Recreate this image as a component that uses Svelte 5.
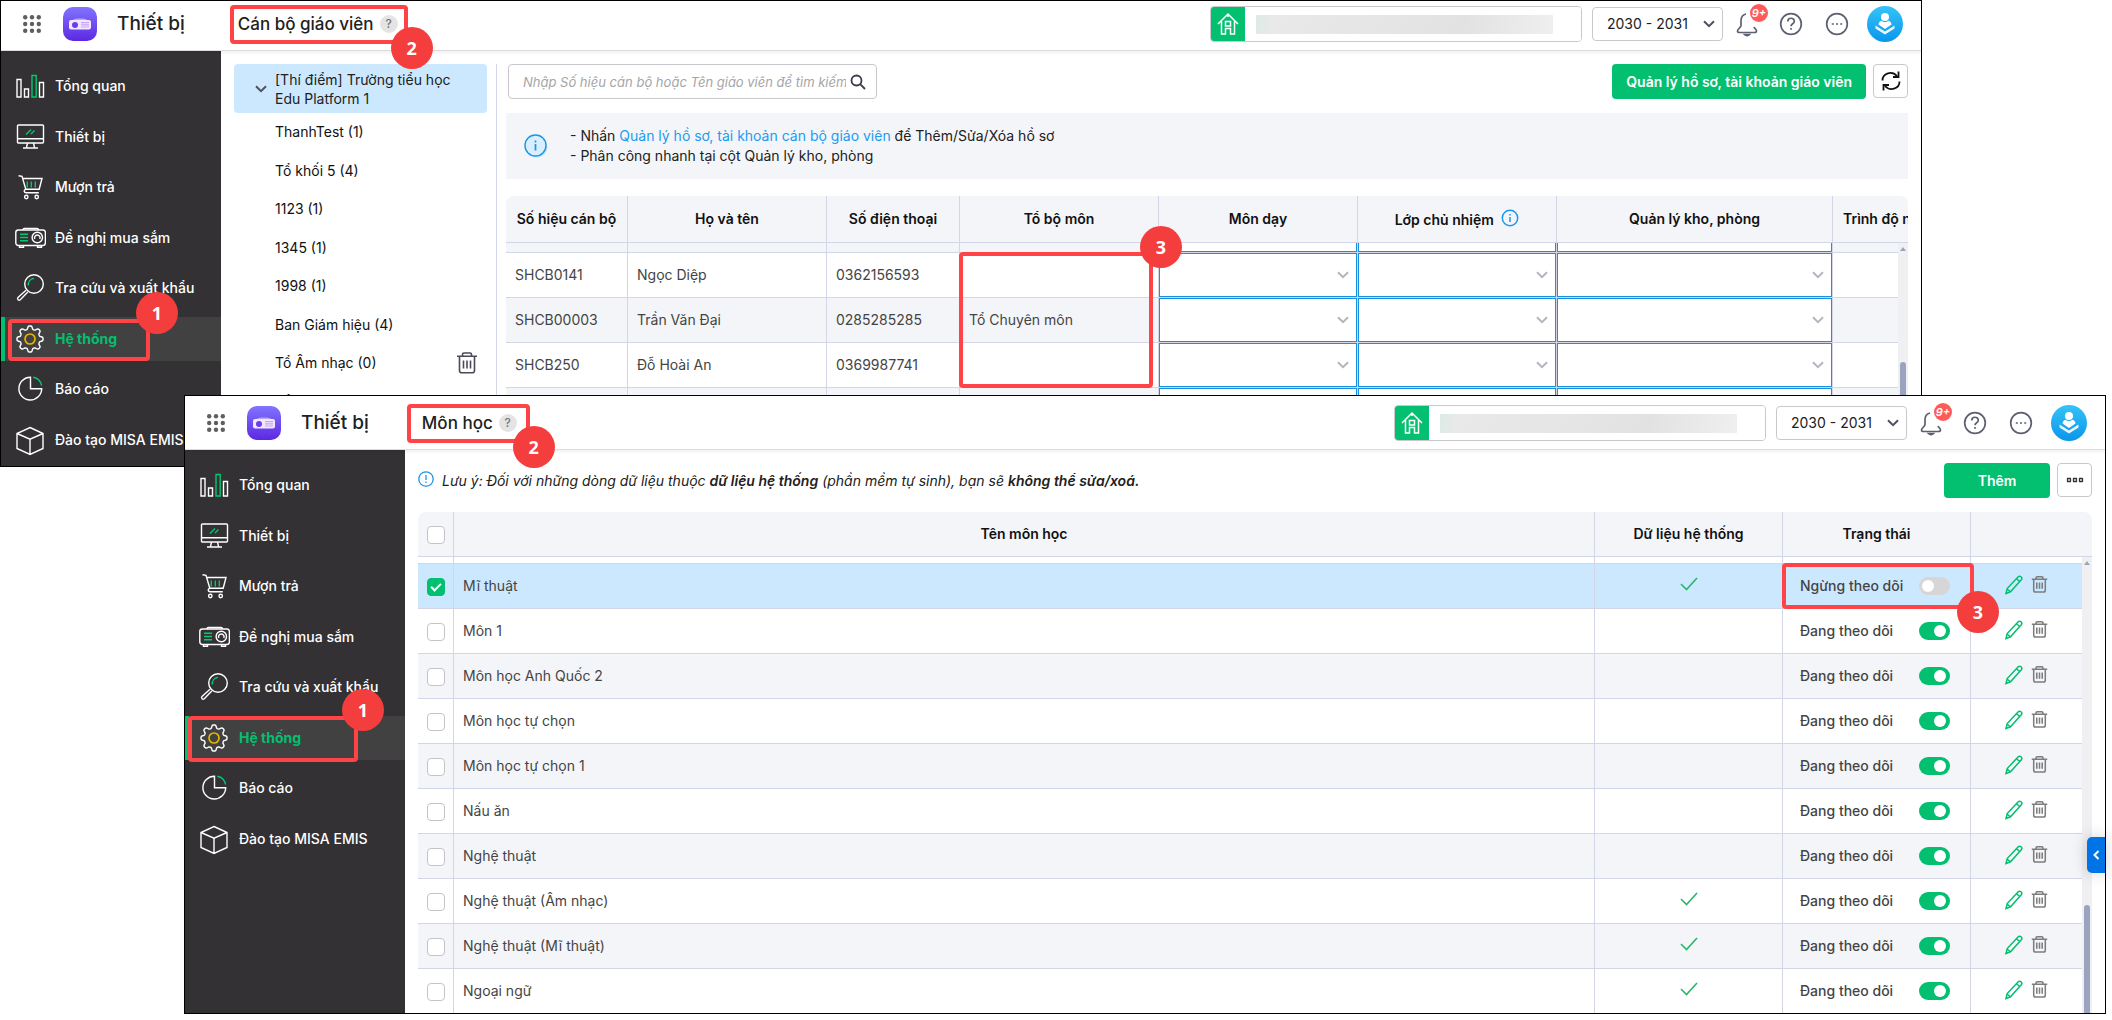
<script>
  const menu = [
    { label: 'Tổng quan', icon: 'bars' },
    { label: 'Thiết bị', icon: 'monitor' },
    { label: 'Mượn trả', icon: 'cart' },
    { label: 'Đề nghị mua sắm', icon: 'projector' },
    { label: 'Tra cứu và xuất khẩu', icon: 'search' },
    { label: 'Hệ thống', icon: 'gear', active: true },
    { label: 'Báo cáo', icon: 'pie' },
    { label: 'Đào tạo MISA EMIS', icon: 'box' },
  ];

  const groups = [
    'ThanhTest (1)',
    'Tổ khối 5 (4)',
    '1123 (1)',
    '1345 (1)',
    '1998 (1)',
    'Ban Giám hiệu (4)',
    'Tổ Âm nhạc (0)',
    'Tổ Chuyên môn (1)',
  ];

  const staff = [
    { code: 'SHCB0141', name: 'Ngọc Diệp', phone: '0362156593', team: '' },
    { code: 'SHCB00003', name: 'Trần Văn Đại', phone: '0285285285', team: 'Tổ Chuyên môn' },
    { code: 'SHCB250', name: 'Đỗ Hoài An', phone: '0369987741', team: '' },
    { code: '', name: '', phone: '', team: '' },
  ];

  const pickers = ['Môn dạy', 'Lớp chủ nhiệm', 'Quản lý kho, phòng'];

  let subjects = $state([
    { name: 'Mĩ thuật', system: true, on: false, picked: true },
    { name: 'Môn 1', system: false, on: true, picked: false },
    { name: 'Môn học Anh Quốc 2', system: false, on: true, picked: false },
    { name: 'Môn học tự chọn', system: false, on: true, picked: false },
    { name: 'Môn học tự chọn 1', system: false, on: true, picked: false },
    { name: 'Nấu ăn', system: false, on: true, picked: false },
    { name: 'Nghệ thuật', system: false, on: true, picked: false },
    { name: 'Nghệ thuật (Âm nhạc)', system: true, on: true, picked: false },
    { name: 'Nghệ thuật (Mĩ thuật)', system: true, on: true, picked: false },
    { name: 'Ngoại ngữ', system: true, on: true, picked: false },
  ]);

  // outline of the eight-tooth gear
  const gearPath =
    Array.from({ length: 97 }, (_, i) => {
      const a = (i / 96) * Math.PI * 2;
      const r = 11.5 + 1.6 * Math.tanh(2 * Math.cos(8 * a));
      return `${i ? 'L' : 'M'}${(16 + r * Math.cos(a)).toFixed(2)} ${(16 + r * Math.sin(a)).toFixed(2)}`;
    }).join('') + 'Z';
</script>

{#snippet menuIcon(name)}
  <svg class="menu-icon" viewBox="0 0 32 32" fill="none" stroke="#fff" stroke-width="1.4" aria-hidden="true">
    {#if name === 'bars'}
      <path d="M3 9.500h4v17.500H3zM10.500 19h4v8h-4zM25.500 12.500h4v14.500h-4z" />
      <path stroke="#00c96f" d="M18 5.500h4.200v21.500H18z" />
    {:else if name === 'monitor'}
      <rect x="3.500" y="4" width="26" height="18" rx="1" />
      <path d="M3.500 17.800h26M13.500 22l-1 4.500M19.500 22l1 4.500M9 27h15" />
      <path stroke="#00c96f" d="M12 13.500l5-5M17 13l3.500-3.500" />
    {:else if name === 'cart'}
      <path d="M4.500 4.800l3.500.6 3.800 12.800h13.400L28 7.500H8.600M11.800 18.200c-2.400 1-2 3.600.5 3.600h12.500" />
      <circle cx="12.300" cy="26" r="1.700" /><circle cx="22.700" cy="26" r="1.700" />
      <path stroke="#00c96f" d="M13.300 10.500v6M17.300 10.500v6M21.300 10.500v6" />
    {:else if name === 'projector'}
      <rect x="1.800" y="8" width="29.600" height="15.500" rx="2.500" />
      <path d="M9 8c0-1 .6-1.500 1.500-1.500h12.500c1 0 1.500.5 1.500 1.500M5.500 24v1.300h4V24M23.500 24v1.300h4V24" />
      <circle cx="23.300" cy="15.500" r="5.200" />
      <path d="M20.800 17a2.800 2.800 0 1 1 5 0" />
      <path stroke="#00c96f" d="M6 12.300h8M6 15.500h8M6 18.700h8" />
    {:else if name === 'search'}
      <circle cx="20" cy="12" r="9.300" />
      <path d="M12 18.200l-8 7.300c-1.300 1.500.7 3.600 2.300 2.200l7.500-7.800" />
      <path stroke="#00c96f" d="M14.300 13.500c-.3-3.800 2-6.800 5.700-7.300" />
    {:else if name === 'gear'}
      <path d={gearPath} />
      <circle cx="16" cy="16" r="5" stroke="#e8b400" stroke-width="1.700" />
    {:else if name === 'pie'}
      <path d="M16.500 4.200a11.400 11.400 0 1 0 11.200 11.600H16.500z" />
      <path stroke="#00c96f" d="M19.300 4.300c4.300.9 7.400 3.900 8.300 8.200" />
    {:else}
      <path d="M16 3.500l13 6v15l-13 6-13-6v-15zM3 9.500l13 5.700 13-5.700M16 15.200v15.300" />
    {/if}
  </svg>
{/snippet}

{#snippet trash(size, stroke)}
  <svg width={size} height={size} viewBox="0 0 22 22" fill="none" stroke="currentColor" stroke-width={stroke} aria-hidden="true">
    <path d="M1 4.300h20M6.500 4V2.500c0-1 .5-1.500 1.500-1.500h6c1 0 1.500.5 1.500 1.500V4M3.500 4.500v14c0 1.500.8 2.300 2.300 2.300h10.400c1.500 0 2.300-.8 2.300-2.300v-14M7.500 8.500v8M11 8.500v8M14.500 8.500v8" />
  </svg>
{/snippet}

{#snippet chevron()}
  <svg class="chevron" viewBox="0 0 12 8" fill="none" stroke="currentColor" stroke-width="2" aria-hidden="true">
    <path d="M1 1.200l5 5 5-5" />
  </svg>
{/snippet}

{#snippet topBar(title)}
  <header class="top-bar">
    <button class="apps" aria-label="Ứng dụng">
      <svg width="18" height="18" viewBox="0 0 18 18" fill="#5f5f5f">
        {#each [2.200, 9, 15.800] as y}
          {#each [2.200, 9, 15.800] as x}
            <circle cx={x} cy={y} r="2.200" />
          {/each}
        {/each}
      </svg>
    </button>
    <span class="logo">
      <svg viewBox="0 0 34 34" aria-hidden="true">
        <path d="M9 13.500c2-1.800 4-2 8-2s6 .2 8 2z" fill="#b5a6ff" />
        <rect x="6" y="13" width="22" height="9.500" rx="2" fill="#f1e8ff" />
        <circle cx="12" cy="18" r="3" fill="#6a3cf0" />
        <path d="M18 15.600h8M18 17.800h8M18 20h8" stroke="#c7a4f5" stroke-width="1.200" />
      </svg>
    </span>
    <span class="app-name">Thiết bị</span>
    <h1 class="page-title">
      {title}
      <span class="hint">?</span>
      <span class="mark title-mark"><b class="badge">2</b></span>
    </h1>
    <div class="school">
      <span class="school-icon">
        <svg viewBox="0 0 34 34" fill="none" stroke="#fff" stroke-width="1.500" aria-hidden="true">
          <path d="M7 17L17 7l10 10M10.500 14v13h4v-5.500h5V27h4V14M14.500 14.500h5v4.500h-5zM17 7v3" />
        </svg>
      </span>
      <input class="school-name" aria-label="Trường" readonly />
      <span class="masked"></span>
    </div>
    <span class="year">
      <select aria-label="Năm học"><option>2030 - 2031</option></select>
      {@render chevron()}
    </span>
    <button class="round-btn bell" aria-label="Thông báo">
      <svg width="24" height="26" viewBox="0 0 24 26" fill="none" stroke="#5c6070" stroke-width="1.700">
        <path d="M11 3C7 3.800 6 7 6 10v4.500c0 2-3.500 3.500-3.500 5.500 0 1 .8 1.500 2 1.500h15c1.200 0 2-.5 2-1.500 0-1.500-2-2.500-2.500-4" />
        <path d="M9.500 23.500c1.300 1.400 3.700 1.400 5 0z" fill="#5c6070" />
      </svg>
      <span class="count">9+</span>
    </button>
    <button class="round-btn" aria-label="Trợ giúp">
      <svg width="24" height="24" viewBox="0 0 24 24" fill="none" stroke="#5c6070" stroke-width="1.700">
        <circle cx="12" cy="12" r="10.300" />
        <path d="M8.800 9.500c0-4.300 6.500-4.200 6.500-.3 0 2.600-3.300 2.500-3.300 5M12 16v1.800" />
      </svg>
    </button>
    <button class="round-btn" aria-label="Thêm tùy chọn">
      <svg width="24" height="24" viewBox="0 0 24 24" fill="none" stroke="#5c6070" stroke-width="1.700">
        <circle cx="12" cy="12" r="10.300" />
        <path d="M6.800 12h2M11 12h2M15.200 12h2" />
      </svg>
    </button>
    <button class="avatar" aria-label="Tài khoản">
      <svg viewBox="0 0 36 36" fill="#fff">
        <circle cx="18" cy="11" r="4" />
        <path d="M18 23l-6.500-4.500c0-2 1.500-3.300 3-3.800 2 1.800 5 1.800 7 0 1.500.5 3 1.800 3 3.800z" />
        <path d="M8.500 19.500L18 25.500l9.500-6v3L18 28.500l-9.500-6z" opacity=".9" />
      </svg>
    </button>
  </header>
{/snippet}

{#snippet sidebar()}
  <nav class="sidebar">
    <ul>
      {#each menu as item}
        <li class:active={item.active}>
          <a href="#top">
            {@render menuIcon(item.icon)}
            {item.label}
          </a>
          {#if item.active}
            <span class="mark menu-mark"><b class="badge">1</b></span>
          {/if}
        </li>
      {/each}
    </ul>
  </nav>
{/snippet}

<div class="stage">
  <section class="window teachers">
    {@render topBar('Cán bộ giáo viên')}
    <div class="workspace">
      {@render sidebar()}
      <main class="content">
        <aside class="tree">
          <button class="tree-root">
            {@render chevron()}
            <span>[Thí điểm] Trường tiểu học Edu Platform 1</span>
          </button>
          <ul>
            {#each groups as group, i}
              <li>
                <span>{group}</span>
                {#if i === 6}
                  <button class="icon-btn" aria-label="Xóa tổ">{@render trash(22, 1.6)}</button>
                {/if}
              </li>
            {/each}
          </ul>
        </aside>

        <div class="pane">
          <div class="toolbar">
            <label class="search">
              <input type="text" aria-label="Tìm kiếm" placeholder="Nhập Số hiệu cán bộ hoặc Tên giáo viên để tìm kiếm" />
              <svg width="16" height="16" viewBox="0 0 16 16" fill="none" stroke="#3b3b46" stroke-width="1.800">
                <circle cx="6.500" cy="6.500" r="5" /><path d="M10.200 10.200L15 15" />
              </svg>
            </label>
            <button class="primary">Quản lý hồ sơ, tài khoản giáo viên</button>
            <button class="square" aria-label="Tải lại">
              <svg width="22" height="22" viewBox="0 0 22 22" fill="none" stroke="#111" stroke-width="1.800">
                <path d="M2.500 10.500C2.500 3 12 .5 17 6M19.500 11.500C19.500 19 10 21.500 5 16" />
                <path d="M18.500 1.500v5.500h-5.500M3.500 20.500V15H9" />
              </svg>
            </button>
          </div>

          <div class="banner">
            <svg width="24" height="24" viewBox="0 0 24 24" aria-hidden="true">
              <circle cx="13" cy="13" r="10.500" fill="#c5e6fb" />
              <circle cx="11.500" cy="11.500" r="10.500" fill="#d9effd" stroke="#1c96e8" stroke-width="1.400" />
              <path d="M11.500 10v6.500M11.500 6.500v2" stroke="#1c96e8" stroke-width="1.700" />
            </svg>
            <p>
              - Nhấn <a href="#profiles">Quản lý hồ sơ, tài khoản cán bộ giáo viên</a> để Thêm/Sửa/Xóa hồ sơ<br />
              - Phân công nhanh tại cột Quản lý kho, phòng
            </p>
          </div>

          <div class="grid">
            <table class="staff">
              <colgroup>
                <col class="c-code" /><col class="c-mid" /><col class="c-phone" /><col class="c-mid" />
                <col class="c-mid" /><col class="c-mid" /><col class="c-room" /><col class="c-level" />
              </colgroup>
              <thead>
                <tr>
                  <th>Số hiệu cán bộ</th>
                  <th>Họ và tên</th>
                  <th>Số điện thoại</th>
                  <th>Tổ bộ môn</th>
                  <th>Môn dạy</th>
                  <th>
                    Lớp chủ nhiệm
                    <svg class="th-info" width="18" height="18" viewBox="0 0 18 18" fill="none" stroke="#1c96e8" stroke-width="1.500">
                      <circle cx="9" cy="9" r="7.700" /><path d="M9 8v5M9 5v1.600" />
                    </svg>
                  </th>
                  <th>Quản lý kho, phòng</th>
                  <th class="left">Trình độ ngoại ngữ</th>
                </tr>
              </thead>
              <tbody>
                <tr class="cut">
                  <td></td><td></td><td></td><td></td>
                  <td class="pick"><div class="cut-box"></div></td>
                  <td class="pick"><div class="cut-box"></div></td>
                  <td class="pick"><div class="cut-box"></div></td>
                  <td></td>
                </tr>
                {#each staff as person, i}
                  <tr>
                    <td>{person.code}</td>
                    <td>{person.name}</td>
                    <td>{person.phone}</td>
                    <td class="team">
                      {person.team}
                      {#if i === 0}
                        <span class="mark team-mark"><b class="badge">3</b></span>
                      {/if}
                    </td>
                    {#each pickers as label}
                      <td class="pick">
                        <div class="picker">
                          <select aria-label={label}><option></option></select>
                          {@render chevron()}
                        </div>
                      </td>
                    {/each}
                    <td></td>
                  </tr>
                {/each}
              </tbody>
            </table>
            <div class="scrollbar staff-scroll"><i></i></div>
          </div>
        </div>
      </main>
    </div>
  </section>

  <section class="window subjects">
    {@render topBar('Môn học')}
    <div class="workspace">
      {@render sidebar()}
      <main class="content">
        <div class="pane">
          <div class="toolbar">
            <p class="note">
              <svg width="16" height="16" viewBox="0 0 16 16" fill="none" stroke="#1c96e8" stroke-width="1.300" aria-hidden="true">
                <circle cx="8" cy="8" r="7.200" /><path d="M8 4v5M8 10.500V12" />
              </svg>
              <span>Lưu ý: Đối với những dòng dữ liệu thuộc <b>dữ liệu hệ thống</b> (phần mềm tự sinh), bạn sẽ <b>không thể sửa/xoá.</b></span>
            </p>
            <button class="primary add">Thêm</button>
            <button class="square" aria-label="Khác">
              <svg width="18" height="6" viewBox="0 0 18 6" fill="none" stroke="#333" stroke-width="1.300">
                <path d="M1.500 1.500h3v3h-3zM7.500 1.500h3v3h-3zM13.500 1.500h3v3h-3z" stroke-linejoin="round" />
              </svg>
            </button>
          </div>

          <div class="grid">
            <table class="subject">
              <colgroup>
                <col class="c-check" /><col /><col class="c-system" /><col class="c-system" /><col class="c-tools" />
              </colgroup>
              <thead>
                <tr>
                  <th><input class="tick" type="checkbox" aria-label="Chọn tất cả" /></th>
                  <th>Tên môn học</th>
                  <th>Dữ liệu hệ thống</th>
                  <th>Trạng thái</th>
                  <th></th>
                </tr>
              </thead>
              <tbody>
                <tr class="cut"><td></td><td></td><td></td><td></td><td></td></tr>
                {#each subjects as subject, i}
                  <tr class:picked={subject.picked}>
                    <td class="center"><input class="tick" type="checkbox" aria-label={subject.name} bind:checked={subject.picked} /></td>
                    <td>{subject.name}</td>
                    <td class="center">
                      {#if subject.system}
                        <svg class="yes" viewBox="0 0 18 14" fill="none" stroke="#2bb56c" stroke-width="1.600"><path d="M1 7l5.500 5.500L17 1" /></svg>
                      {/if}
                    </td>
                    <td class="status">
                      <label>
                        {subject.on ? 'Đang theo dõi' : 'Ngừng theo dõi'}
                        <input class="toggle" type="checkbox" bind:checked={subject.on} />
                      </label>
                      {#if i === 0}
                        <span class="mark status-mark"><b class="badge">3</b></span>
                      {/if}
                    </td>
                    <td class="tools">
                      <button class="icon-btn edit" aria-label="Sửa">
                        <svg width="20" height="20" viewBox="0 0 20 20" fill="none" stroke="currentColor" stroke-width="1.500">
                          <path d="M2 18.500l1.200-5L14 2c2-2 5 .5 3.300 2.800L6.500 16.800zM12.500 3.800l3.200 2.700M3 14l3 2.500" />
                        </svg>
                      </button>
                      <button class="icon-btn" aria-label="Xóa">{@render trash(17, 2)}</button>
                    </td>
                  </tr>
                {/each}
              </tbody>
            </table>
            <div class="scrollbar subject-scroll"><i></i></div>
          </div>
        </div>
      </main>
    </div>
    <button class="drawer" aria-label="Mở bảng bên">
      <svg width="7" height="10" viewBox="0 0 7 10" fill="none" stroke="#fff" stroke-width="2"><path d="M5.500 1L1.500 5l4 4" /></svg>
    </button>
  </section>
</div>

<style>
  :global(body) {
    margin: 0;
    background: #fff;
  }

  .stage {
    --green: #03bf70;
    --line: #d3d6e6;
    --soft: #f4f5f9;
    --red: #ff4346;
    --field: #c9c9cd;
    font-family: Inter, 'Liberation Sans', sans-serif;
    font-size: 14px;
    line-height: 20px;
    color: #212121;
  }

  button,
  input,
  select {
    box-sizing: border-box;
    margin: 0;
    font: inherit;
    color: inherit;
  }

  button {
    padding: 0;
    border: 0;
    background: none;
    cursor: pointer;
  }

  ul {
    margin: 0;
    padding: 0;
    list-style: none;
  }

  svg {
    display: block;
    flex-shrink: 0;
  }

  .window {
    position: relative;
    border: 1px solid #000;
    background: #fff;
  }

  .teachers {
    margin-right: 190px;
  }

  .subjects {
    margin: -72px 6px 0 184px;
  }

  /* numbered callouts */
  .mark {
    position: absolute;
    z-index: 3;
    box-sizing: border-box;
    border: 4px solid var(--red);
    border-radius: 4px;
    pointer-events: none;
  }

  .badge {
    position: absolute;
    display: grid;
    place-items: center;
    width: 42px;
    height: 42px;
    border-radius: 50%;
    background: #f43d3d;
    color: #fff;
    font: bold 18px/20px 'Open Sans', 'Noto Sans', sans-serif;
  }

  .title-mark {
    inset: -4px -10px -4px -8px;
  }

  .title-mark .badge {
    right: -29px;
    bottom: -29px;
  }

  .subjects .title-mark {
    left: -15px;
    right: -13px;
  }

  .menu-mark {
    top: 2px;
    left: 7px;
    width: 142px;
    height: 42px;
  }

  .subjects .menu-mark {
    top: 0;
    left: 3px;
    width: 170px;
    height: 46px;
  }

  .menu-mark .badge {
    top: -31px;
    right: -32px;
  }

  .subjects .menu-mark .badge {
    right: -30px;
  }

  .team-mark {
    top: -1px;
    left: -1px;
    right: 5px;
    height: 136px;
  }

  .team-mark .badge {
    top: -30px;
    right: -33px;
  }

  .status-mark {
    inset: -1px -4px -1px -1px;
  }

  .status-mark .badge {
    right: -29px;
    bottom: -28px;
  }

  /* top bar */
  .top-bar {
    position: relative;
    z-index: 1;
    display: flex;
    align-items: center;
    padding: 5px 18px 8px 22px;
    border-bottom: 1px solid #dcdcdc;
    box-shadow: 0 2px 3px rgba(0, 0, 0, 0.06);
  }

  .subjects .top-bar {
    padding-top: 9px;
  }

  .logo {
    width: 34px;
    height: 34px;
    margin-left: 22px;
    border-radius: 10px;
    background: linear-gradient(#8274ff, #5c28e2);
  }

  .app-name {
    margin-left: 20px;
    font-size: 19px;
    font-weight: 500;
  }

  .page-title {
    position: relative;
    display: flex;
    align-items: center;
    gap: 6px;
    margin: 0 auto 0 53px;
    height: 31px;
    font-size: 17px;
    font-weight: 500;
  }

  .hint {
    width: 18px;
    border-radius: 9px;
    background: #e4e4e4;
    color: #757575;
    font-size: 12px;
    line-height: 18px;
    text-align: center;
  }

  .school {
    position: relative;
    display: flex;
    box-sizing: border-box;
    width: 372px;
    border: 1px solid var(--field);
    border-radius: 4px;
    overflow: hidden;
  }

  .school-icon {
    width: 34px;
    background: var(--green);
  }

  .school-name {
    flex: 1;
    min-width: 0;
    height: 34px;
    border: 0;
    outline: 0;
  }

  .masked {
    position: absolute;
    inset: 8px 28px 7px 45px;
    background: linear-gradient(100deg, #dcebe4, #e9e9e9 6%, #e2e2e2 70%, #efefef);
    pointer-events: none;
  }

  .year {
    display: grid;
    align-items: center;
    width: 131px;
    margin: 0 10px;
  }

  .year select {
    grid-area: 1 / 1;
    height: 34px;
    padding: 0 14px;
    border: 1px solid var(--field);
    border-radius: 4px;
    background: #fff;
    appearance: none;
  }

  .chevron {
    width: 12px;
    height: 8px;
    color: #50505f;
  }

  .year .chevron,
  .picker .chevron {
    grid-area: 1 / 1;
    justify-self: end;
    margin-right: 8px;
    pointer-events: none;
  }

  .round-btn {
    position: relative;
    margin-right: 22px;
  }

  .bell {
    margin: 0 20px 0 2px;
  }

  .count {
    position: absolute;
    top: -7px;
    right: -9px;
    width: 18px;
    border-radius: 9px;
    background: #ff5a5a;
    color: #fff;
    font-size: 11px;
    font-style: italic;
    font-weight: 600;
    line-height: 18px;
  }

  .avatar {
    width: 36px;
    height: 36px;
    margin-left: -4px;
    border-radius: 50%;
    background: linear-gradient(#35c3f8, #0a96ea);
  }

  /* left menu */
  .workspace {
    display: flex;
  }

  .sidebar {
    width: 220px;
    flex-shrink: 0;
    padding: 13px 0 4px;
    box-sizing: border-box;
    background: #343135;
    color: #fff;
    font-weight: 500;
  }

  .sidebar ul {
    display: flex;
    flex-direction: column;
    justify-content: space-between;
    height: 398px;
  }

  .sidebar li {
    position: relative;
  }

  .sidebar a {
    display: flex;
    align-items: center;
    gap: 9px;
    height: 44px;
    padding-left: 13px;
    color: inherit;
    text-decoration: none;
    white-space: nowrap;
  }

  .sidebar .active a {
    background: #414141;
    box-shadow: inset 4px 0 var(--green);
    color: var(--green);
    font-weight: 700;
  }

  .menu-icon {
    width: 32px;
    height: 32px;
  }

  /* main area */
  .content {
    display: flex;
    flex: 1;
    min-width: 0;
    padding: 13px 13px 0;
    overflow: hidden;
  }

  /* the first window is only as tall as its menu */
  .teachers .content {
    contain: size;
  }

  .tree {
    flex-shrink: 0;
    width: 253px;
    margin-right: 9px;
    padding-right: 9px;
    border-right: 1px solid var(--line);
  }

  .tree-root {
    display: flex;
    align-items: center;
    gap: 8px;
    width: 100%;
    height: 49px;
    padding: 0 30px 0 21px;
    border-radius: 4px;
    background: #cce8ff;
    line-height: 19px;
    text-align: left;
  }

  .tree ul {
    display: grid;
    grid-auto-rows: 1fr;
    height: 308px;
  }

  .tree li {
    display: flex;
    align-items: center;
    justify-content: space-between;
    padding: 0 9px 0 41px;
    color: #111;
  }

  .icon-btn {
    color: #4a4a58;
  }

  .pane {
    flex: 1;
    min-width: 0;
  }

  .toolbar {
    display: flex;
    gap: 7px;
    height: 35px;
    margin-bottom: 14px;
  }

  .search {
    display: flex;
    align-items: center;
    box-sizing: border-box;
    width: 369px;
    margin: 0 auto 0 2px;
    padding-right: 10px;
    border: 1px solid var(--field);
    border-radius: 4px;
  }

  .search input {
    flex: 1;
    min-width: 0;
    margin-right: 4px;
    padding: 0 0 0 14px;
    border: 0;
    outline: 0;
    background: none;
    font-size: 13px;
    font-style: italic;
  }

  .search input::placeholder {
    color: #a5a5a8;
  }

  .primary {
    padding: 0 14px;
    border-radius: 4px;
    background: var(--green);
    color: #fff;
    font-weight: 600;
  }

  .add {
    width: 106px;
  }

  .square {
    display: grid;
    place-items: center;
    width: 35px;
    height: 34px;
    border: 1px solid var(--field);
    border-radius: 4px;
  }

  .banner {
    display: flex;
    align-items: center;
    gap: 22px;
    margin-bottom: 17px;
    padding: 13px 18px;
    background: var(--soft);
  }

  .banner p {
    margin: 0;
  }

  .banner a {
    color: #1b9cf0;
    text-decoration: none;
  }

  .note {
    display: flex;
    gap: 8px;
    margin: 8px auto 0 0;
    font-style: italic;
  }

  .note b {
    font-weight: 600;
  }

  /* tables */
  .grid {
    position: relative;
    overflow: hidden;
    border-radius: 8px 8px 0 0;
  }

  table {
    width: 100%;
    border-spacing: 0;
    table-layout: fixed;
  }

  .staff {
    width: 1488px;
  }

  .c-code { width: 122px; }
  .c-mid { width: 199px; }
  .c-phone { width: 133px; }
  .c-room { width: 276px; }
  .c-check { width: 36px; }
  .c-system { width: 188px; }
  .c-tools { width: 121px; }

  th,
  td {
    box-sizing: border-box;
    height: 45px;
    padding: 0 9px;
    border-right: 1px solid var(--line);
    border-bottom: 1px solid var(--line);
    white-space: nowrap;
  }

  th {
    padding: 0 4px;
    background: var(--soft);
    color: #111;
    font-weight: 600;
    text-align: center;
  }

  .staff th {
    height: 47px;
  }

  th.left {
    padding-left: 10px;
    text-align: left;
  }

  th:last-child,
  td:last-child {
    border-right: 0;
  }

  .th-info {
    display: inline-block;
    margin-left: 4px;
    vertical-align: -2px;
  }

  td {
    color: #444;
  }

  .cut td {
    height: 10px;
  }

  .subject .cut td {
    height: 7px;
  }

  .staff tbody tr:nth-child(odd) td,
  .subject tbody tr:nth-child(2n + 4) td {
    background: var(--soft);
  }

  .subject tbody .picked td {
    background: #cce8ff;
  }

  .subject tbody tr:last-child td {
    height: 44px;
    border-bottom: 0;
  }

  .subject tbody tr:nth-child(odd) td,
  .staff tbody tr:nth-child(even) td {
    background: #fff;
  }

  .subject tbody tr:nth-child(2n + 4) td {
    background: var(--soft);
  }

  .team,
  .status {
    position: relative;
  }

  .pick {
    padding: 0;
  }

  .picker {
    display: grid;
    align-items: center;
  }

  .picker select {
    grid-area: 1 / 1;
    width: 100%;
    height: 44px;
    border: 1px solid #1b8fe0;
    border-radius: 0;
    background: #fff;
    appearance: none;
  }

  .picker .chevron {
    color: #b4b4c2;
  }

  .cut-box {
    box-sizing: border-box;
    height: 9px;
    border: 1px solid #1b8fe0;
    border-top: 0;
    background: #fff;
  }

  .center {
    padding: 0;
    text-align: center;
  }

  .tick {
    display: inline-block;
    width: 18px;
    height: 18px;
    border: 1px solid #c4c4c8;
    border-radius: 4px;
    background: #fff;
    vertical-align: middle;
    appearance: none;
  }

  .tick:checked {
    border-color: var(--green);
    background: var(--green);
  }

  .tick:checked::after {
    content: '';
    display: block;
    width: 8px;
    height: 4px;
    margin: 4px 3px;
    border: solid #fff;
    border-width: 0 0 2px 2px;
    transform: rotate(-45deg);
  }

  .yes {
    width: 18px;
    height: 14px;
    margin: 0 auto 5px;
  }

  .status {
    padding: 0 20px 0 17px;
    font-weight: 500;
  }

  .status label {
    display: flex;
    align-items: center;
    justify-content: space-between;
  }

  .toggle {
    width: 31px;
    height: 18px;
    padding: 3px;
    border-radius: 9px;
    background: #d6d6d6;
    appearance: none;
  }

  .toggle::before {
    content: '';
    display: block;
    width: 12px;
    height: 12px;
    border-radius: 50%;
    background: #fff;
  }

  .toggle:checked {
    background: var(--green);
  }

  .toggle:checked::before {
    margin-left: 12px;
  }

  .tools {
    padding: 0 11px 4px 0;
    text-align: center;
  }

  .tools .icon-btn {
    margin: 0 2px;
    color: #7d7d7d;
    vertical-align: middle;
  }

  .tools .edit {
    color: var(--green);
  }

  .scrollbar {
    position: absolute;
    right: 0;
    bottom: 0;
    width: 10px;
    background: #f0f0f2;
  }

  .staff-scroll {
    top: 47px;
  }

  .subject-scroll {
    top: 45px;
  }

  .scrollbar::before {
    content: '';
    position: absolute;
    top: 4px;
    left: 2px;
    border: 3px solid transparent;
    border-top: 0;
    border-bottom: 4px solid #9aa4be;
  }

  .scrollbar i {
    position: absolute;
    right: 2px;
    bottom: 0;
    width: 6px;
    border-radius: 3px 3px 0 0;
    background: #9aa4be;
  }

  .staff-scroll i {
    top: 119px;
  }

  .subject-scroll i {
    top: 348px;
  }

  .drawer {
    position: absolute;
    right: 0;
    bottom: 140px;
    display: grid;
    place-items: center;
    width: 18px;
    height: 36px;
    border-radius: 5px 0 0 5px;
    background: #0073e6;
    box-shadow: 0 0 16px rgba(0, 0, 0, 0.2);
  }
</style>
